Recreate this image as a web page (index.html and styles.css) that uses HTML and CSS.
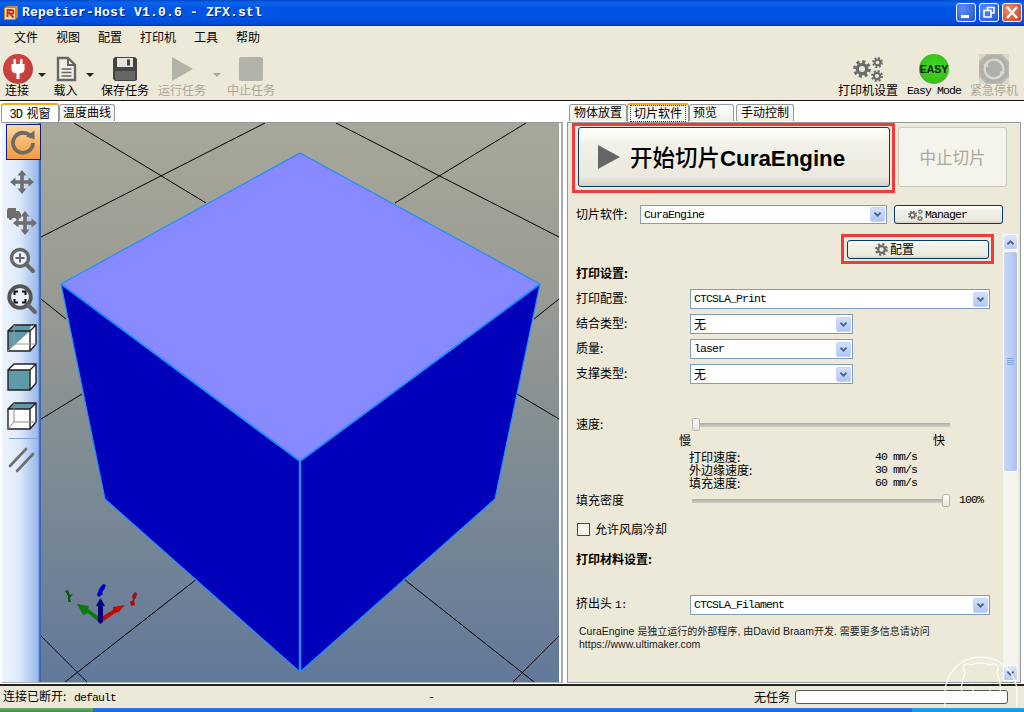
FILE: index.html
```html
<!DOCTYPE html>
<html lang="zh">
<head>
<meta charset="utf-8">
<title>Repetier-Host V1.0.6 - ZFX.stl</title>
<link rel="stylesheet" href="styles.css">
</head>
<body>
<svg class="defs" width="0" height="0" aria-hidden="true">
  <defs>
    <symbol id="gear" viewBox="0 0 20 20">
      <circle cx="10" cy="10" r="5.2" fill="none" stroke="currentColor" stroke-width="3.6"/>
      <circle cx="10" cy="10" r="8.2" fill="none" stroke="currentColor" stroke-width="3.4" stroke-dasharray="3.4 3.04"/>
    </symbol>
    <symbol id="gears" viewBox="0 0 30 24">
      <use href="#gear" x="0" y="3" width="18" height="18"/>
      <use href="#gear" x="19" y="0" width="11" height="11"/>
      <use href="#gear" x="18" y="13" width="12" height="12"/>
    </symbol>
    <symbol id="chev" viewBox="0 0 17 17">
      <path d="M4.5 6 8.5 10 12.5 6" fill="none" stroke="#4d6185" stroke-width="2.4"/>
    </symbol>
  </defs>
</svg>
<div class="window">
  <header class="titlebar">
    <svg class="appicon" width="16" height="16" viewBox="0 0 16 16"><path d="M1 3 4 1H15V12L12 15H1Z" fill="#c9862f"/><rect x="2" y="3" width="10" height="11" fill="#f0d8a8"/><path d="M4.500 12V5H8Q10.500 5 10.500 7T8 9H7L10.500 12.500M6.500 6.500V8" fill="none" stroke="#d02a10" stroke-width="1.800"/></svg>
    <span class="title">Repetier-Host V1.0.6 - ZFX.stl</span>
    <div class="winbtns">
      <span class="winbtn"><svg width="18" height="17" viewBox="0 0 18 17"><rect x="4" y="11" width="8" height="3" fill="#fff"/></svg></span>
      <span class="winbtn"><svg width="18" height="17" viewBox="0 0 18 17"><path d="M7.500 6V3.500H14V9H11.500M4 6.500H11V13H4Z" fill="none" stroke="#fff" stroke-width="1.500"/></svg></span>
      <span class="winbtn close"><svg width="18" height="17" viewBox="0 0 18 17"><path d="M4 3 14 14M14 3 4 14" stroke="#fff" stroke-width="2.400"/></svg></span>
    </div>
  </header>

  <nav class="menubar">
    <span>文件</span><span>视图</span><span>配置</span><span>打印机</span><span>工具</span><span>帮助</span>
  </nav>

  <div class="toolbar">
    <div class="tb w-connect">
      <svg class="plugicon" width="30" height="30" viewBox="0 0 30 30"><defs><radialGradient id="red" cx=".45" cy=".4" r=".62"><stop offset="0" stop-color="#dc4a46"/><stop offset=".85" stop-color="#c43c3a"/><stop offset="1" stop-color="#9a4a46"/></radialGradient></defs><circle cx="15" cy="15" r="15" fill="url(#red)"/><path d="M10.500 5H13V10H17V5H19.500V10H21.500V15Q21.500 19 16.500 19.500V25H13.500V19.500Q8.500 19 8.500 15V10H10.500Z" fill="#fff"/></svg>
      <span class="lbl">连接</span>
    </div>
    <i class="drop"></i>
    <div class="tb w-load">
      <svg width="22" height="26" viewBox="0 0 22 26"><path d="M3 2H13L20 9V24H3Z" fill="#f0efe6" stroke="#666" stroke-width="2.400"/><path d="M13 2V9H20" fill="none" stroke="#666" stroke-width="2"/><path d="M6.500 13H16.500M6.500 16.500H16.500M6.500 20H16.500" stroke="#666" stroke-width="1.600"/></svg>
      <span class="lbl">载入</span>
    </div>
    <i class="drop"></i>
    <div class="tb w-save">
      <svg width="26" height="26" viewBox="0 0 26 26"><path d="M3 1H23L25 3V24L23 25H3L1 23V3Z" fill="#444"/><rect x="5" y="2" width="16" height="9" fill="#e4e3da"/><rect x="15" y="3.500" width="3" height="6" fill="#444"/><rect x="3" y="15" width="20" height="9" fill="#666"/></svg>
      <span class="lbl">保存任务</span>
    </div>
    <div class="tb w-run off">
      <svg width="24" height="26" viewBox="0 0 24 26"><path d="M2 1 23 13 2 25Z" fill="#b3b3aa"/></svg>
      <span class="lbl">运行任务</span>
    </div>
    <i class="drop faint"></i>
    <div class="tb w-stop off">
      <svg width="24" height="24" viewBox="0 0 24 24"><rect width="24" height="24" rx="2" fill="#b3b3aa"/></svg>
      <span class="lbl">中止任务</span>
    </div>
    <div class="spacer"></div>
    <div class="tb w-printer">
      <svg class="gears" width="30" height="26"><use href="#gears"/></svg>
      <span class="lbl">打印机设置</span>
    </div>
    <div class="tb w-easy">
      <svg width="30" height="30" viewBox="0 0 30 30"><defs><radialGradient id="green" cx=".5" cy=".45" r=".55"><stop offset="0" stop-color="#46d82a"/><stop offset=".85" stop-color="#35c41c"/><stop offset="1" stop-color="#5aa04a"/></radialGradient></defs><circle cx="15" cy="15" r="15" fill="url(#green)"/><text x="15" y="18.500" text-anchor="middle" class="easytxt">EASY</text></svg>
      <span class="lbl m">Easy Mode</span>
    </div>
    <div class="tb w-estop off">
      <svg width="32" height="32" viewBox="0 0 32 32"><rect width="32" height="32" fill="#b9b9b2"/><path d="M0 0 8 0 0 8ZM32 0 24 0 32 8ZM0 32 8 32 0 24ZM32 32 24 32 32 24Z" fill="#d8d7cc"/><circle cx="16" cy="16" r="15" fill="#b0b0ab"/><circle cx="16" cy="16" r="10" fill="none" stroke="#d9d9d3" stroke-width="2.500"/><path d="M4 12 9 8 10 14ZM28 20 23 24 22 18Z" fill="#d9d9d3"/></svg>
      <span class="lbl">紧急停机</span>
    </div>
  </div>

  <main class="main">
    <section class="leftpane">
      <div class="tabs">
        <span class="tab active t-3d"><span class="m tab3d">3D</span> 视窗</span>
        <span class="tab t-temp">温度曲线</span>
      </div>
      <div class="leftpage">
        <aside class="sidebar">
          <div class="tool on"><span class="toolbox">
            <svg width="28" height="28" viewBox="0 0 28 28"><path d="M22.500 9.500A10 10 0 1 0 24 15" fill="none" stroke="#6e6a66" stroke-width="3.800"/><path d="M17 8.500 25.500 2.500V11.500Z" fill="#6e6a66"/></svg>
          </span></div>
          <div class="tool">
            <svg width="26" height="26" viewBox="0 0 26 26"><path d="M13 1 17.500 6.500H14.800V11.200H19.500V8.500L25 13 19.500 17.500V14.800H14.800V19.500H17.500L13 25 8.500 19.500H11.200V14.800H6.500V17.500L1 13 6.500 8.500V11.200H11.200V6.500H8.500Z" fill="#6e6e6e"/></svg>
          </div>
          <div class="tool">
            <svg width="32" height="30" viewBox="0 0 32 30"><path d="M19 5 23.500 10.500H20.800V15.200H25.500V12.500L31 17 25.500 21.500V18.800H20.800V23.500H23.500L19 29 14.500 23.500H17.200V18.800H12.500V21.500L7 17 12.500 12.500V15.200H17.200V10.500H14.500Z" fill="#6e6e6e"/><path d="M2 2H10V5H13L15 8V12H1V4Z" fill="#6e6e6e"/><circle cx="4.500" cy="12" r="2" fill="#6e6e6e"/><circle cx="11.500" cy="12" r="2" fill="#6e6e6e"/></svg>
          </div>
          <div class="tool">
            <svg width="26" height="26" viewBox="0 0 26 26"><circle cx="11" cy="11" r="8.500" fill="#e9f0fb" stroke="#666" stroke-width="3.400"/><path d="M17 17 24 24" stroke="#666" stroke-width="4" stroke-linecap="round"/><path d="M6.500 11H15.500M11 6.500V15.500" stroke="#666" stroke-width="2"/></svg>
          </div>
          <div class="tool">
            <svg width="30" height="30" viewBox="0 0 30 30"><circle cx="13" cy="13" r="10.800" fill="#e9f0fb" stroke="#555" stroke-width="3.800"/><path d="M21 21 28 28" stroke="#666" stroke-width="4" stroke-linecap="round"/><path d="M7.500 11V7.500H11M15 7.500H18.500V11M18.500 15V18.500H15M11 18.500H7.500V15" fill="none" stroke="#111" stroke-width="2"/></svg>
          </div>
          <div class="tool">
            <svg width="30" height="28" viewBox="0 0 30 28"><path d="M7 1H29V20L23 27H1V7Z" fill="#fff"/><path d="M1 7H23L1 27ZM7 1H24L23 7H1Z" fill="#5f9aa8"/><path d="M1 7H23V27H1ZM1 7 7 1H29V20L23 27M23 7 29 1" fill="none" stroke="#222" stroke-width="1.400"/><path d="M7 1V20H29M7 20 1 27" fill="none" stroke="#999" stroke-width="1"/></svg>
          </div>
          <div class="tool">
            <svg width="30" height="28" viewBox="0 0 30 28"><path d="M7 1H29V20L23 27H1V7Z" fill="#fff"/><rect x="1" y="7" width="22" height="20" fill="#5f9aa8"/><path d="M1 7H23V27H1ZM1 7 7 1H29V20L23 27M23 7 29 1" fill="none" stroke="#222" stroke-width="1.400"/></svg>
          </div>
          <div class="tool">
            <svg width="30" height="28" viewBox="0 0 30 28"><path d="M7 1H29V20L23 27H1V7Z" fill="#fff"/><path d="M7 1H29L23 7H1Z" fill="#5f9aa8"/><path d="M1 7H23V27H1ZM1 7 7 1H29V20L23 27M23 7 29 1" fill="none" stroke="#222" stroke-width="1.400"/><path d="M7 1V20H29M7 20 1 27" fill="none" stroke="#888" stroke-width="1"/></svg>
          </div>
          <div class="toolsep"></div>
          <div class="tool">
            <svg width="28" height="28" viewBox="0 0 28 28"><path d="M2 21 18 4M9 26 25 9" stroke="#6e6e6e" stroke-width="2.600" stroke-linecap="round"/></svg>
          </div>
        </aside>
        <div class="viewport">
          <svg class="scene" width="518" height="559" viewBox="41 123 518 559">
            <g stroke="#000" stroke-width="1" fill="none">
              <path d="M74 123 206 203M265 123 41 237M336 123 559 237M526 123 395 203"/>
              <path d="M41 299 66 319M559 299 534 319M82 394 41 419M517 394 559 419"/>
              <path d="M195.500 580 65 682M405 580 534 682M41 636 87 682M559 636 513 682"/>
            </g>
            <path d="M61 284 300 461V672L105 499ZM540 284 300 461V672L495 499Z" fill="#0000bb"/>
            <path d="M300 153 540 284 300 461 61 284Z" fill="#8888ff"/>
            <path d="M300 153 540 284 495 499 300 672 105 499 61 284Z" fill="none" stroke="#1e90ff" stroke-width="1.200"/>
            <path d="M61 284 300 461 540 284" fill="none" stroke="#1e90ff" stroke-width="2"/>
            <path d="M300 461V672" fill="none" stroke="#1e90ff" stroke-width="2.400"/>
            <path d="M100 623 88 613 83 615 77 604 89 606 88 609 101 618Z" fill="#0a7a0a"/>
            <path d="M101 623 115 613 119 612 125 605 113 607 113 610 100 618Z" fill="#c40808"/>
            <path d="M98 622V606H96L100.500 598 105 606H103V622L100.500 624Z" fill="#000080"/>
            <path d="M65 591 68 590 70 595 73 594 70 598 71 602 68 602 68 596Z" fill="#0a5a0a"/>
            <path d="M99 589 103 584 106 585 104 590 102 592 103 594 99 597 97 595Z" fill="#0000cc"/>
            <path d="M132 596 135 592 137 593 136 598 134 600 135 605 131 606 130 602 133 600Z" fill="#a01010"/>
          </svg>
        </div>
      </div>
    </section>
    <div class="splitter"></div>
    <section class="rightpane">
      <div class="tabs">
        <span class="tab t-place">物体放置</span>
        <span class="tab active t-slicer"><span class="focus">切片软件</span></span>
        <span class="tab t-preview">预览</span>
        <span class="tab t-manual">手动控制</span>
      </div>
      <div class="rightpage">
        <div class="slicebar">
          <div class="redbox box-start">
            <button class="btn start">
              <svg width="22" height="24" viewBox="0 0 22 24"><path d="M0 0 22 12 0 24Z" fill="#666"/></svg>
              <span class="starttxt">开始切片<b>CuraEngine</b></span>
            </button>
          </div>
          <button class="btn stop">中止切片</button>
        </div>
        <div class="slicerrow">
          <span class="rowlabel">切片软件:</span>
          <div class="combo c-slicer"><span class="m">CuraEngine</span><svg class="arrow"><use href="#chev"/></svg></div>
          <button class="btn manager"><svg class="gears" width="15" height="12"><use href="#gears"/></svg><span class="m">Manager</span></button>
        </div>
        <div class="scrollarea">
          <div class="form">
            <div class="redbox box-config">
              <button class="btn config"><svg class="gears" width="13" height="13"><use href="#gear"/></svg><span class="cfgtxt">配置</span></button>
            </div>
            <div class="heading h-print">打印设置:</div>
            <div class="formrow r-first"><span>打印配置:</span><div class="combo wide"><span class="m">CTCSLA_Print</span><svg class="arrow"><use href="#chev"/></svg></div></div>
            <div class="formrow r-next"><span>结合类型:</span><div class="combo narrow"><span>无</span><svg class="arrow"><use href="#chev"/></svg></div></div>
            <div class="formrow r-next"><span>质量:</span><div class="combo narrow"><span class="m">laser</span><svg class="arrow"><use href="#chev"/></svg></div></div>
            <div class="formrow r-next"><span>支撑类型:</span><div class="combo narrow"><span>无</span><svg class="arrow"><use href="#chev"/></svg></div></div>
            <div class="sliderrow r-speed"><span>速度:</span><div class="slider"><i class="thumb"></i></div></div>
            <div class="ends"><span>慢</span><span>快</span></div>
            <div class="speeds">
              <span>打印速度:</span><span class="m">40 mm/s</span>
              <span>外边缘速度:</span><span class="m">30 mm/s</span>
              <span>填充速度:</span><span class="m">60 mm/s</span>
            </div>
            <div class="sliderrow r-fill"><span>填充密度</span><div class="slider full"><i class="thumb"></i></div><span class="m pct">100%</span></div>
            <label class="check"><i class="checkbox"></i>允许风扇冷却</label>
            <div class="heading h-mat">打印材料设置:</div>
            <div class="formrow r-ext"><span>挤出头 <span class="m">1:</span></span><div class="combo wide"><span class="m">CTCSLA_Filament</span><svg class="arrow"><use href="#chev"/></svg></div></div>
            <p class="desc">CuraEngine <span class="zh">是独立运行的外部程序</span>, <span class="zh">由</span>David Braam<span class="zh">开发</span>. <span class="zh">需要更多信息请访问</span><br>https://www.ultimaker.com</p>
          </div>
          <div class="scrollbar">
            <span class="sbtn"><svg width="15" height="15" viewBox="0 0 17 17"><path d="M4.500 11 8.500 7 12.500 11" fill="none" stroke="#4d6185" stroke-width="2.400"/></svg></span>
            <span class="sthumb"><i></i><i></i><i></i><i></i></span>
            <span class="strack"></span>
            <span class="sbtn"><svg width="15" height="15"><use href="#chev"/></svg></span>
          </div>
        </div>
      </div>
    </section>
  </main>

  <footer class="status">
    <span class="st-left">连接已断开: <span class="m st-name">default</span></span>
    <span class="st-dash m">-</span>
    <span class="st-job">无任务</span>
    <span class="progress"></span>
  </footer>
  <div class="taskbar"><span class="startbtn"></span><span class="taskmid"></span><span class="tray"></span></div>

  <svg class="watermark" width="80" height="56" viewBox="0 0 80 56" aria-hidden="true">
    <path d="M2 56V42A36 36 0 0 1 74 42V56" fill="none" stroke="#fff" stroke-opacity=".8" stroke-width="1.500"/>
    <path d="M20 52Q16 34 22 22L20 16Q22 11 28 14Q37 10 47 14Q53 11 55 16L54 22Q60 36 56 52" fill="none" stroke="#fff" stroke-opacity=".8" stroke-width="1.500"/>
    <path d="M31 44Q38 48 46 44M30 36V50M47 36V50" fill="none" stroke="#fff" stroke-opacity=".7" stroke-width="1.500"/>
  </svg>
</div>
</body>
</html>
```

FILE: styles.css
```css
* { box-sizing: border-box; }
html, body { margin: 0; padding: 0; overflow: hidden; }
body {
  width: 1024px; height: 712px;
  font: 12px/14px "Noto Sans CJK SC", "Liberation Sans", sans-serif;
  color: #000; background: #ece9d8;
}
.defs { position: absolute; }
.m {
  font-family: "Liberation Mono", monospace;
  font-size: 11.5px; letter-spacing: -.9px;
}
.window {
  position: relative; width: 1024px; height: 712px; overflow: hidden;
  display: flex; flex-direction: column;
}

/* title */
.titlebar {
  height: 26px; flex: none; display: flex; align-items: center; padding: 0 2px 1px 3px;
  background: linear-gradient(#0048c8 0, #0a5fe8 2px, #0b62ea 4px, #0055e5 8px, #0053e0 20px, #0048cf 24px, #0038a8 26px);
}
.appicon { flex: none; }
.title {
  margin-left: 3px;
  font: bold 13px/16px "Liberation Mono", monospace;
  letter-spacing: .2px; color: #fff; text-shadow: 1px 1px 0 #00207a; white-space: pre;
}
.winbtns { margin-left: auto; display: flex; gap: 3px; }
.winbtn {
  width: 20px; height: 19px; display: flex; align-items: center; justify-content: center;
  border: 1px solid #fff; border-radius: 3px;
  background: radial-gradient(circle at 30% 30%, #5c8cf0, #2456cf);
}
.winbtn.close { background: radial-gradient(circle at 30% 30%, #ea8a6c, #c9401e); }

/* menu */
.menubar {
  height: 24px; flex: none; display: flex; gap: 18px; align-items: center; padding: 0 0 2px 14px;
  background: #ece9d8;
}

/* toolbar */
.toolbar { height: 50px; flex: none; display: flex; background: #ece9d8; }
.tb {
  flex: none; height: 50px; padding-top: 4px; display: flex; flex-direction: column; align-items: center;
}
.tb .lbl { height: 14px; margin-top: -1px; white-space: nowrap; line-height: 14px; }
.tb.off .lbl { color: #aca899; }
.lbl.m { font-size: 11.5px; letter-spacing: -.9px; margin-top: 0; }
.tb > svg { display: block; margin-top: 0; height: 30px; }
.w-connect { width: 34px; }
.plugicon { margin-left: 2px; }
.w-load { width: 35px; margin-left: 0; }
.w-save { width: 56px; margin-left: 1px; }
.w-run { width: 54px; margin-left: 2px; }
.w-stop { width: 58px; margin-left: -1px; }
.w-printer { width: 60px; }
.w-easy { width: 60px; margin-left: 6px; }
.w-estop { width: 52px; margin-left: 4px; margin-right: 4px; }
.spacer { flex: 1; }
.drop {
  flex: none; width: 8px; height: 4px; margin: 23px 2px 0 4px;
  border-left: 4px solid transparent; border-right: 4px solid transparent; border-top: 4px solid #222;
}
.w-load + .drop { margin-left: 3px; }
.drop.faint { border-top-color: #aca899; margin-left: 4px; margin-right: 2px; }

/* main */
.main {
  height: 586px; flex: none; display: flex; background: #fff;
  border-top: 1px solid #111; border-bottom: 2px solid #222; padding-left: 1px;
}
.leftpane { width: 562px; flex: none; display: flex; flex-direction: column; }
.splitter { width: 4px; flex: none; background: #fff; }
.rightpane { width: 454px; flex: none; display: flex; flex-direction: column; }
.tabs { height: 21px; flex: none; display: flex; align-items: flex-end; }
.rightpane .tabs { padding-left: 1px; }
.tab {
  height: 17px; flex: none; border: 1px solid #919b9c; border-bottom: 0; border-radius: 3px 3px 0 0;
  background: linear-gradient(#fff, #f1efe3); line-height: 14px; text-align: center; white-space: nowrap;
}
.tab.active {
  height: 19px; background: #f8f7f1; border-top: 2px solid #f5a623; border-color: #f5a623 #919b9c #919b9c; line-height: 15px;
}
.tab.t-3d { background: #fff; margin-bottom: -1px; height: 20px; width: 58px; }
.tab3d { font-size: 12px; letter-spacing: -1px; margin-right: 2px; }
.t-temp { width: 56px; margin-bottom: 1px; }
.t-place { width: 58px; margin-left: 1px; margin-bottom: 1px; }
.t-slicer { width: 62px; }
.t-preview { width: 45px; margin-bottom: 1px; text-align: left; padding-left: 3px; }
.t-manual { width: 58px; margin-left: 2px; margin-bottom: 1px; }
.focus { display: inline-block; outline: 1px dotted #333; outline-offset: 0; padding: 0 3px; height: 15px; line-height: 13px; }

.leftpage {
  height: 561px; flex: none; display: flex; border-style: solid; border-width: 1px 2px 1px 1px;
  border-color: #919b9c #a9afb0 #a9afb0 #fff; padding-right: 2px;
}
.sidebar {
  width: 39px; flex: none;
  background: linear-gradient(90deg, #eef4fe 0, #dde9fb 45%, #9ab8ea 92%, #3a66b8 97%, #3a66b8 100%);
}
.tool { height: 39px; display: flex; align-items: center; justify-content: center; }
.tool.on { align-items: flex-start; padding-top: 1px; padding-left: 3px; }
.toolbox {
  width: 35px; height: 36px; display: flex; align-items: center; justify-content: center;
  border: 1px solid #10207a; background: linear-gradient(#fbd9a6, #f9b463 55%, #f79a3e);
}
.toolsep { height: 1px; margin: 3px 3px 0 7px; background: #7fa2e0; }
.viewport {
  width: 518px; height: 559px; flex: none;
  background: linear-gradient(#a8a79a, #999b93 30%, #7f8c93 60%, #63799a);
}
.scene { display: block; }

/* right */
.rightpage {
  height: 561px; flex: none; display: flex; flex-direction: column; padding-left: 1px;
  border: 1px solid #919b9c; background: #ece9d8;
}
.slicebar { display: flex; align-items: flex-start; margin-left: 3px; }
.redbox { border: 3px solid #f23a3a; flex: none; }
.box-start { width: 323px; height: 70px; padding: 1px 2px 0 3px; }
.btn {
  display: flex; align-items: center; padding: 0; margin: 0; color: #000;
  font: inherit; border: 1px solid #003c74; border-radius: 3px;
  background: linear-gradient(#fff, #f3f2ea 25%, #ebe9dc 85%, #d6d0c5);
}
.start { width: 312px; height: 60px; padding-left: 19px; }
.starttxt { margin-left: 10px; font-size: 22.5px; line-height: 26px; white-space: nowrap; font-weight: 500; }
.starttxt b { font: bold 22.3px/26px "Liberation Sans", sans-serif; }
.stop {
  width: 109px; height: 60px; margin: 4px 0 0 3px; justify-content: center; font-size: 16.5px;
  color: #aca899; border-color: #c9c7ba; background: #f4f3ec;
}
.slicerrow { display: flex; align-items: center; height: 19px; margin-top: 12px; padding-left: 7px; }
.rowlabel { width: 64px; flex: none; margin-top: -2px; }
.combo {
  height: 20px; flex: none; display: flex; align-items: center; justify-content: space-between;
  padding: 0 1px 0 3px; background: #fff; border: 1px solid #7f9db9; line-height: 18px;
}
.c-slicer { width: 247px; height: 19px; }
.wide { width: 300px; }
.narrow { width: 163px; }
.arrow {
  width: 15px; height: 15px; flex: none; border: 1px solid #c3d3fb; border-radius: 2px;
  background: linear-gradient(#d3e0fb, #b0c6f5);
}
.manager { width: 109px; height: 19px; margin-left: 7px; padding-left: 13px; gap: 2px; }
.gears { color: #6b6b6b; display: block; flex: none; }
.scrollarea { height: 447px; flex: none; display: flex; margin-top: 10px; }
.form { width: 434px; flex: none; padding-left: 7px; }
.box-config { width: 153px; height: 30px; margin-left: 265px; padding: 3px 2px 0 3px; }
.config { width: 142px; height: 19px; padding-left: 27px; gap: 2px; }
.cfgtxt { margin-top: -2px; }
.heading { font-weight: 700; height: 14px; }
.h-print { margin-top: 2px; }
.formrow { display: flex; align-items: center; height: 20px; }
.formrow > span:first-child { width: 114px; flex: none; margin-top: -2px; }
.r-first { margin-top: 9px; }
.r-next { margin-top: 5px; }
.sliderrow { display: flex; align-items: center; height: 14px; }
.sliderrow > span:first-child { width: 116px; flex: none; margin-top: -1px; }
.slider {
  width: 258px; height: 13px; flex: none; display: flex; align-items: center;
  background: linear-gradient(#0000 40%, #b0aea3 40%, #d0cec6 70%, #0000 70%);
}
.slider.full { justify-content: flex-end; }
.thumb {
  width: 8px; height: 13px; display: block; border: 1px solid #b9b7ab; border-radius: 2px;
  background: linear-gradient(#fff, #e6e4d8);
}
.r-speed { margin-top: 33px; }
.ends { display: flex; justify-content: space-between; width: 266px; margin: 3px 0 0 103px; height: 12px; line-height: 12px; }
.speeds { display: grid; grid-template-columns: 186px auto; margin: 4px 0 0 113px; line-height: 13px; }
.speeds span { height: 13px; line-height: 13px; }
.r-fill { margin-top: 4px; }
.pct { margin-left: 9px; }
.check { display: flex; align-items: center; height: 14px; margin-top: 15px; padding-left: 1px; gap: 5px; }
.checkbox { width: 13px; height: 13px; flex: none; display: block; background: #f4f3ec; border: 1px solid #1c5180; }
.h-mat { margin-top: 16px; }
.r-ext { margin-top: 29px; }
.desc {
  margin: 10px 0 0 3px; font: 10.5px/13px "Liberation Sans", "Noto Sans CJK SC", sans-serif; color: #1a1a1a; white-space: nowrap;
}
.zh { font-size: 10px; }
.scrollbar {
  width: 15px; height: 447px; flex: none; display: flex; flex-direction: column;
  background: #f5f4ee;
}
.sbtn {
  width: 15px; height: 16px; flex: none; display: flex; align-items: center; justify-content: center;
  background: linear-gradient(#dde7fc, #b8cbf6); border: 1px solid #fff; border-radius: 2px;
}
.sbtn svg { display: block; }
.sthumb {
  width: 15px; height: 221px; flex: none; margin-top: 1px; display: flex; flex-direction: column; gap: 1px;
  align-items: center; justify-content: center;
  background: linear-gradient(90deg, #c8d6f8, #bacbf5 60%, #a9bff0); border: 1px solid #fff; border-radius: 3px;
}
.sthumb i { width: 7px; height: 1px; display: block; background: #8aa5e4; }
.strack { flex: 1; }

/* status */
.status {
  height: 22px; flex: none; display: flex; align-items: center; background: #ece9d8; padding: 0 16px 0 3px; white-space: nowrap;
}
.st-left { width: 425px; flex: none; margin-top: -1px; }
.st-name { margin-left: 5px; }
.st-dash { width: 326px; flex: none; }
.st-job { width: 41px; flex: none; margin-top: -1px; }
.progress { width: 213px; height: 14px; flex: none; background: #fff; border: 1px solid #555; border-radius: 3px; }
.taskbar { flex: 1; display: flex; }
.startbtn { width: 93px; background: linear-gradient(#6fae6f, #3f8f3f); }
.taskmid { width: 819px; background: linear-gradient(#2a78e8, #1d63d8); }
.tray { flex: 1; background: linear-gradient(#22a5ee, #1a8fe0); }

.watermark { position: absolute; left: 943px; top: 651px; pointer-events: none; }
.easytxt { font: bold 10.5px "Liberation Sans", sans-serif; fill: #0a1a0a; }
```
